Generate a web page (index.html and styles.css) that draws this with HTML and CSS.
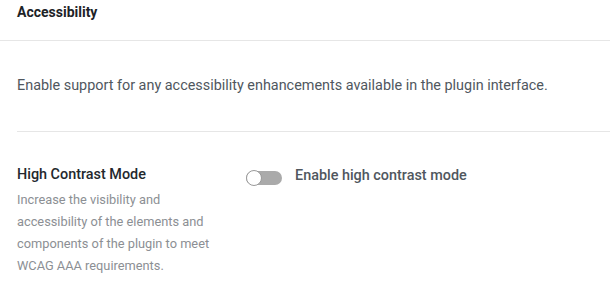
FILE: index.html
```html
<!DOCTYPE html>
<html lang="en">
<head>
<meta charset="utf-8">
<title>Accessibility</title>
<link rel="stylesheet" href="styles.css">
</head>
<body>
<div class="panel">
  <header class="panel-header">
    <h2 class="panel-title">Accessibility</h2>
  </header>
  <div class="panel-body">
    <p class="intro">Enable support for any accessibility enhancements available in the plugin interface.</p>
    <div class="setting">
      <div class="setting-info">
        <h3 class="setting-title">High Contrast Mode</h3>
        <p class="setting-desc">Increase the visibility and accessibility of the elements and components of the plugin to meet WCAG AAA requirements.</p>
      </div>
      <label class="setting-control">
        <span class="toggle"><span class="toggle-knob"></span></span>
        <span class="toggle-label">Enable high contrast mode</span>
      </label>
    </div>
  </div>
</div>
</body>
</html>
```
FILE: styles.css
```css
html, body {
  margin: 0;
  padding: 0;
  background: #ffffff;
}

body {
  font-family: Roboto, "Liberation Sans", sans-serif;
  color: #50575e;
}

.panel-header {
  height: 41px;
  padding: 2px 17px 0;
  box-sizing: border-box;
  border-bottom: 1px solid #e6e6e6;
}

.panel-title {
  margin: 0;
  font-size: 14px;
  line-height: 20px;
  font-weight: 700;
  color: #1d2327;
}

.panel-body {
  padding: 0 0 0 17px;
}

.intro {
  margin: 0;
  padding: 35px 0;
  font-size: 14.4px;
  line-height: 20px;
  color: #50575e;
  border-bottom: 1px solid #e6e6e6;
}

.setting {
  display: flex;
  align-items: flex-start;
  padding-top: 33px;
}

.setting-info {
  width: 211px;
  flex: none;
  margin-right: 18px;
}

.setting-title {
  margin: 0;
  font-size: 14.4px;
  line-height: 20px;
  font-weight: 500;
  color: #23282d;
}

.setting-desc {
  margin: 4px 0 0;
  font-size: 12.8px;
  line-height: 22px;
  color: #8c8f94;
}

.setting-control {
  display: flex;
  align-items: center;
  margin-top: 5px;
}

.toggle {
  position: relative;
  width: 36px;
  height: 14px;
  border-radius: 7px;
  background: #aaaaaa;
  flex: none;
}

.toggle-knob {
  position: absolute;
  left: 0;
  top: -1px;
  width: 14px;
  height: 14px;
  border-radius: 50%;
  background: #ffffff;
  border: 1px solid #9a9a9a;
}

.toggle-label {
  margin-left: 13px;
  margin-top: -4px;
  font-size: 14.4px;
  line-height: 20px;
  font-weight: 500;
  color: #50575e;
}
```
